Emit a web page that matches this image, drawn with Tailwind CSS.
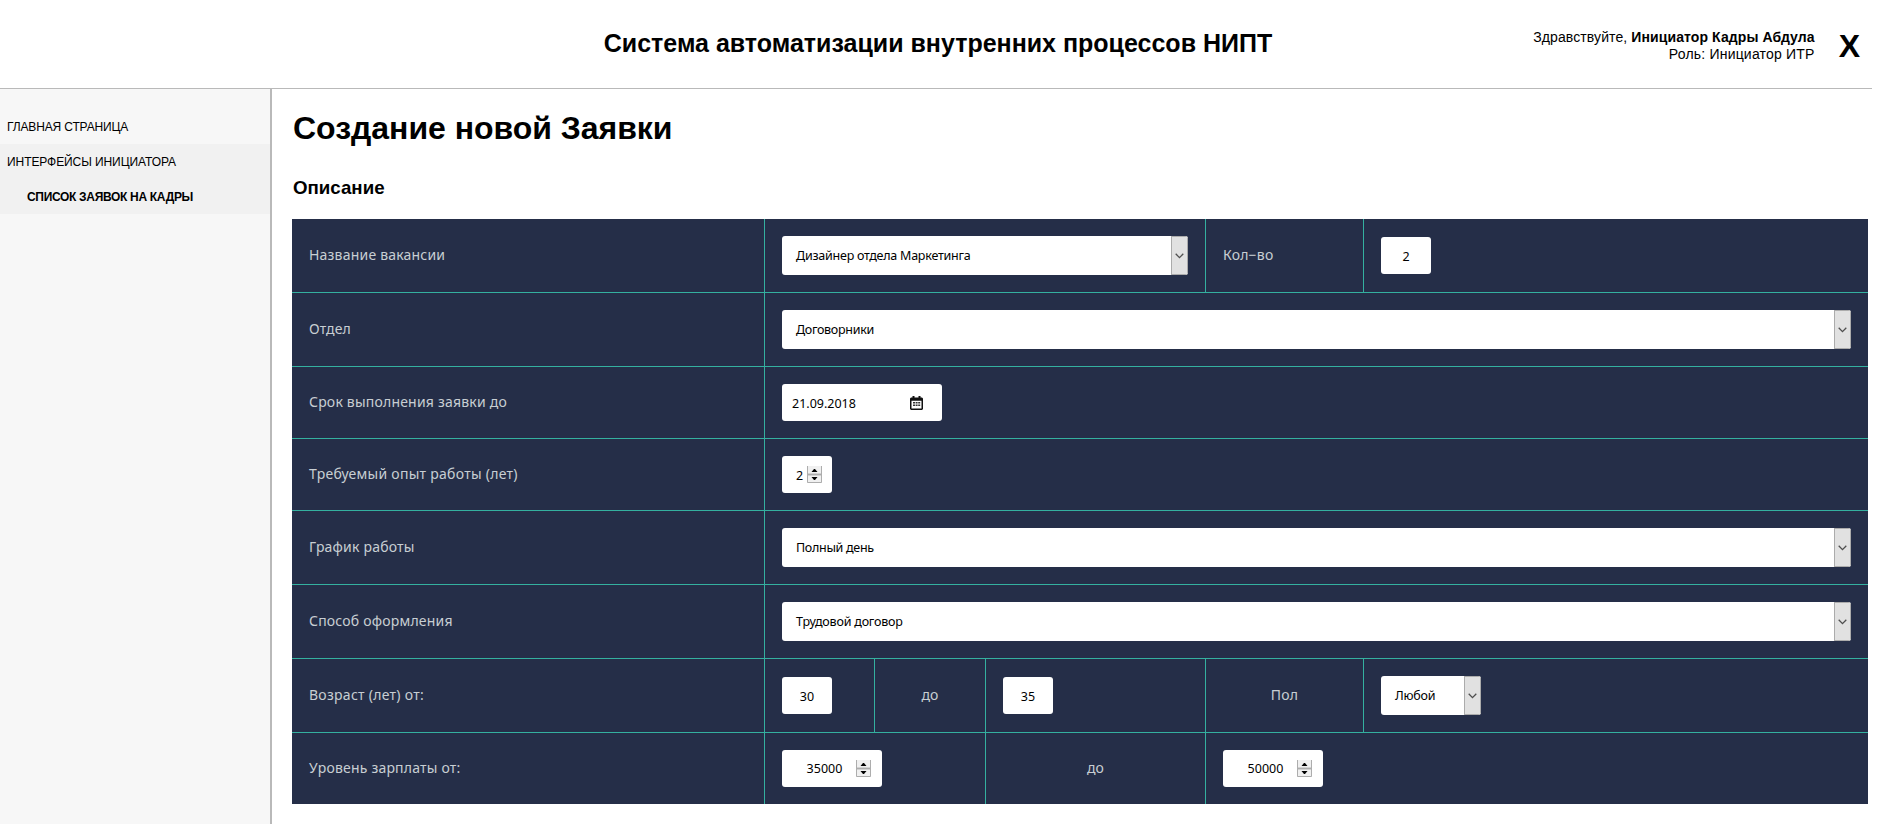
<!DOCTYPE html>
<html lang="ru">
<head>
<meta charset="utf-8">
<title>Создание новой Заявки</title>
<script src="https://cdn.jsdelivr.net/npm/@tailwindcss/browser@4"></script>
</head>
<body class="h-[824px] overflow-hidden bg-white text-black font-['Liberation_Sans',Arial,sans-serif]">
<svg class="hidden">
  <symbol id="chevron" viewBox="0 0 9 6"><path d="M.7 .8 4.5 4.6 8.3 .8" fill="none" stroke="#505050" stroke-width="1.3"/></symbol>
  <symbol id="spin" viewBox="0 0 15 17">
    <path d="M0 0h15v17H0z" fill="#f0f0f0"/>
    <path d="M.5 0v16.5h14V0M1 8.5h13" fill="none" stroke="#adadad"/>
    <path d="M1 7.5h13M1 9.5h13" fill="none" stroke="#bdbdbd" stroke-width=".6"/>
    <path d="M4.500 6 7 3h1l2.500 3zM4.500 11 7 14h1l2.500-3z" fill="#000"/>
  </symbol>
</svg>
<div class="w-[1872px] h-full flex flex-col">
  <header class="h-[89px] shrink-0 border-b border-[#b9b9b9] grid grid-cols-[1fr_auto_1fr] items-center">
    <span></span>
    <h1 class="text-[25px] leading-[30px] font-bold whitespace-nowrap pl-[4px] pb-[2px]">Система автоматизации внутренних процессов НИПТ</h1>
    <div class="flex justify-end items-center pr-[12px] pt-[3px]">
      <div class="text-right text-[14px] leading-[17px] tracking-[0.1px]">
        <div>Здравствуйте, <b>Инициатор Кадры Абдула</b></div>
        <div class="tracking-[0.2px]">Роль: Инициатор ИТР</div>
      </div>
      <span class="ml-[24px] text-[32px] leading-[36px] font-bold">X</span>
    </div>
  </header>
  <div class="flex flex-1 min-h-0">
    <nav class="w-[272px] shrink-0 border-r-2 border-[#b9b9b9] bg-[#f7f7f7] pt-[20px] text-[12px] leading-[35px] tracking-[-0.08px]">
      <div class="pl-[7px] h-[35px] pt-px tracking-[-0.14px]">ГЛАВНАЯ СТРАНИЦА</div>
      <div class="bg-[#f1f1f1]">
        <div class="pl-[7px] h-[35px] pt-px">ИНТЕРФЕЙСЫ ИНИЦИАТОРА</div>
        <div class="pl-[27px] h-[35px] pt-px font-bold tracking-[-0.31px]">СПИСОК ЗАЯВОК НА КАДРЫ</div>
      </div>
    </nav>
    <main class="pl-[20px] pt-[20px]">
      <h2 class="pl-px text-[32px] leading-[38px] font-bold tracking-[-0.03px]">Создание новой Заявки</h2>
      <h3 class="pl-px mt-[29px] text-[18.72px] leading-[24px] font-bold">Описание</h3>
      <div class="mt-[19px] w-[1576px] bg-[#252e48] grid grid-cols-[473px_110px_111px_220px_158px_504px] grid-rows-[74px_74px_72px_72px_74px_74px_74px_71px] text-[14px] text-[#c8ced3] tracking-[0.2px] font-['Noto_Sans',sans-serif] *:flex *:items-center *:px-[17px] *:border-[#34b09f]">
        <div class="border-r border-b pb-[2px]">Название вакансии</div>
        <div class="col-span-3 border-r border-b">
          <div class="h-[39px] w-[406px] flex items-center rounded-[3px] bg-white pl-[14px] text-[12.5px] tracking-[-0.23px] text-black overflow-hidden"><span class="flex-1 pt-[2px]">Дизайнер отдела Маркетинга</span><span class="w-[17px] h-full border border-[#ababab] bg-[#e1e1e1] flex items-center justify-center"><svg class="w-[9px] h-[6px]"><use href="#chevron"/></svg></span></div>
        </div>
        <div class="border-r border-b pb-[2px]">Кол−во</div>
        <div class="border-b"><div class="h-[37px] w-[50px] rounded-[3px] bg-white flex items-center justify-center pt-[3px] text-[12.5px] tracking-normal text-black">2</div></div>

        <div class="border-r border-b pb-[2px]">Отдел</div>
        <div class="col-span-5 border-b">
          <div class="h-[39px] flex-1 flex items-center rounded-[3px] bg-white pl-[14px] text-[12.5px] tracking-[-0.3px] text-black overflow-hidden"><span class="flex-1 pt-[2px]">Договорники</span><span class="w-[17px] h-full border border-[#ababab] bg-[#e1e1e1] flex items-center justify-center"><svg class="w-[9px] h-[6px]"><use href="#chevron"/></svg></span></div>
        </div>

        <div class="border-r border-b pb-[2px]">Срок выполнения заявки до</div>
        <div class="col-span-5 border-b">
          <div class="h-[37px] w-[160px] flex items-center justify-between rounded-[3px] bg-white pl-[10px] pr-[19px] text-[12.5px] tracking-normal text-black"><span class="pt-[3px]">21.09.2018</span>
            <svg class="w-[13px] h-[14px]" viewBox="0 0 13 14"><path d="M2.500 0h2v1.500h4V0h2v1.500H12l1 1V13l-1 1H1l-1-1V2.500l1-1h1.500zM1.500 4.800v7.700h10V4.800z" fill="#111" fill-rule="evenodd"/><path d="M3 6h2v1.500H3zM5.600 6h2v1.500h-2zM8.200 6h2v1.500h-2zM3 8.600h2v1.500H3zM5.600 8.600h2v1.500h-2zM8.200 8.600h2v1.500h-2z" fill="#333"/></svg>
          </div>
        </div>

        <div class="border-r border-b pb-[2px] tracking-[0.27px]">Требуемый опыт работы (лет)</div>
        <div class="col-span-5 border-b">
          <div class="h-[37px] w-[50px] flex items-center rounded-[3px] bg-white pl-[14px] pr-[10px] text-[12.5px] tracking-normal text-black"><span class="flex-1 pt-[3px]">2</span><svg class="w-[15px] h-[17px]"><use href="#spin"/></svg></div>
        </div>

        <div class="border-r border-b pb-[2px]">График работы</div>
        <div class="col-span-5 border-b">
          <div class="h-[39px] flex-1 flex items-center rounded-[3px] bg-white pl-[14px] text-[12.5px] tracking-[-0.3px] text-black overflow-hidden"><span class="flex-1 pt-[2px]">Полный день</span><span class="w-[17px] h-full border border-[#ababab] bg-[#e1e1e1] flex items-center justify-center"><svg class="w-[9px] h-[6px]"><use href="#chevron"/></svg></span></div>
        </div>

        <div class="border-r border-b pb-[2px]">Способ оформления</div>
        <div class="col-span-5 border-b">
          <div class="h-[39px] flex-1 flex items-center rounded-[3px] bg-white pl-[14px] text-[12.5px] tracking-[-0.2px] text-black overflow-hidden"><span class="flex-1 pt-[2px]">Трудовой договор</span><span class="w-[17px] h-full border border-[#ababab] bg-[#e1e1e1] flex items-center justify-center"><svg class="w-[9px] h-[6px]"><use href="#chevron"/></svg></span></div>
        </div>

        <div class="border-r border-b pb-[2px] tracking-[0.27px]">Возраст (лет) от:</div>
        <div class="border-r border-b"><div class="h-[37px] w-[50px] rounded-[3px] bg-white flex items-center justify-center pt-[3px] text-[12.5px] tracking-normal text-black">30</div></div>
        <div class="border-r border-b pb-[2px] justify-center">до</div>
        <div class="border-r border-b"><div class="h-[37px] w-[50px] rounded-[3px] bg-white flex items-center justify-center pt-[3px] text-[12.5px] tracking-normal text-black">35</div></div>
        <div class="border-r border-b pb-[2px] justify-center">Пол</div>
        <div class="border-b">
          <div class="h-[39px] w-[100px] flex items-center rounded-[3px] bg-white pl-[14px] text-[12.5px] tracking-[-0.2px] text-black overflow-hidden"><span class="flex-1 pt-[2px]">Любой</span><span class="w-[17px] h-full border border-[#ababab] bg-[#e1e1e1] flex items-center justify-center"><svg class="w-[9px] h-[6px]"><use href="#chevron"/></svg></span></div>
        </div>

        <div class="border-r pb-[2px]">Уровень зарплаты от:</div>
        <div class="col-span-2 border-r">
          <div class="h-[37px] w-[100px] flex items-center rounded-[3px] bg-white pl-[11px] pr-[11px] text-[12.5px] tracking-normal text-black"><span class="flex-1 pt-[2px] text-center">35000</span><svg class="w-[15px] h-[17px]"><use href="#spin"/></svg></div>
        </div>
        <div class="border-r pb-[2px] justify-center">до</div>
        <div class="col-span-2">
          <div class="h-[37px] w-[100px] flex items-center rounded-[3px] bg-white pl-[11px] pr-[11px] text-[12.5px] tracking-normal text-black"><span class="flex-1 pt-[2px] text-center">50000</span><svg class="w-[15px] h-[17px]"><use href="#spin"/></svg></div>
        </div>
      </div>
    </main>
  </div>
</div>
</body>
</html>
